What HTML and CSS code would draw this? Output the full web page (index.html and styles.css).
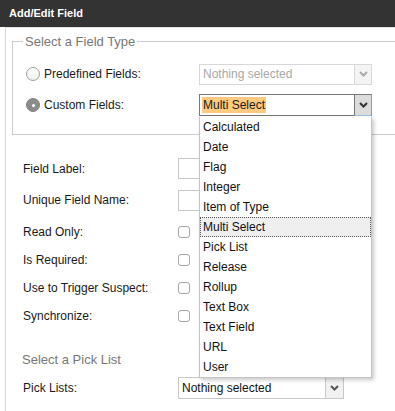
FILE: index.html
```html
<!DOCTYPE html>
<html>
<head>
<meta charset="utf-8">
<link rel="stylesheet" href="styles.css">
</head>
<body>
<div class="header">Add/Edit Field</div>
<div class="content">
  <fieldset class="type-set">
    <legend>Select a Field Type</legend>
    <div class="type-row">
      <label class="radio-label"><span class="radio"></span>Predefined Fields:</label>
      <div class="select disabled">
        <span class="select-text">Nothing selected</span>
        <span class="arrow"><svg width="9" height="6" viewBox="0 0 9 6"><path d="M1 1 L4.5 4.5 L8 1" fill="none" stroke="currentColor" stroke-width="2"/></svg></span>
      </div>
    </div>
    <div class="type-row second">
      <label class="radio-label"><span class="radio checked"></span>Custom Fields:</label>
      <div class="select-wrap">
        <div class="select open">
          <span class="select-text"><span class="hl">Multi Select</span></span>
          <span class="arrow"><svg width="9" height="6" viewBox="0 0 9 6"><path d="M1 1 L4.5 4.5 L8 1" fill="none" stroke="currentColor" stroke-width="2"/></svg></span>
        </div>
        <ul class="menu">
          <li>Calculated</li>
          <li>Date</li>
          <li>Flag</li>
          <li>Integer</li>
          <li>Item of Type</li>
          <li class="active">Multi Select</li>
          <li>Pick List</li>
          <li>Release</li>
          <li>Rollup</li>
          <li>Text Box</li>
          <li>Text Field</li>
          <li>URL</li>
          <li>User</li>
        </ul>
      </div>
    </div>
  </fieldset>

  <div class="form">
    <div class="row tall first-tall"><span class="lbl">Field Label:</span><span class="input"></span></div>
    <div class="row tall"><span class="lbl">Unique Field Name:</span><span class="input"></span></div>
    <div class="row check first"><span class="lbl">Read Only:</span><span class="checkbox"></span></div>
    <div class="row check"><span class="lbl">Is Required:</span><span class="checkbox"></span></div>
    <div class="row check"><span class="lbl">Use to Trigger Suspect:</span><span class="checkbox"></span></div>
    <div class="row check"><span class="lbl">Synchronize:</span><span class="checkbox"></span></div>
    <div class="section-title">Select a Pick List</div>
    <div class="row check"><span class="lbl">Pick Lists:</span>
      <div class="select pick">
        <span class="select-text">Nothing selected</span>
        <span class="arrow"><svg width="9" height="6" viewBox="0 0 9 6"><path d="M1 1 L4.5 4.5 L8 1" fill="none" stroke="currentColor" stroke-width="2"/></svg></span>
      </div>
    </div>
  </div>
</div>
</body>
</html>
```
FILE: styles.css
```css
html, body {
  margin: 0;
  padding: 0;
  background: #fff;
  overflow: hidden;
}
body {
  font-family: "Liberation Sans", Arial, Helvetica, sans-serif;
  font-size: 12px;
  color: #1a1a1a;
  width: 395px;
  height: 411px;
}
.header {
  height: 27px;
  background: #333333;
  color: #fff;
  font-weight: bold;
  font-size: 11px;
  line-height: 26px;
  padding-left: 9px;
}
.content {
  margin-left: 5px;
  border-left: 1px solid #d9d9d9;
  border-top: 1px solid #e2e2e2;
  padding-left: 6px;
  height: 383px;
}
.type-set {
  margin: 5px 0 0 0;
  padding: 13px 0 18px 13px;
  border: 1px solid #cccccc;
  border-right: none;
}
.type-set legend {
  font-size: 13px;
  color: #777;
  padding: 0 2px;
  margin-left: -3px;
  line-height: 17px;
}
.type-row {
  display: flex;
  align-items: center;
  height: 22px;
}
.type-row.second {
  margin-top: 9px;
}
.radio-label {
  width: 173px;
  display: flex;
  align-items: center;
  gap: 4px;
}
.radio {
  width: 12px;
  height: 12px;
  border: 1px solid #a0a0a0;
  border-radius: 50%;
  background: linear-gradient(#ffffff, #f0f0f0);
  box-sizing: content-box;
  flex: none;
}
.radio.checked {
  background: #8c8c8c;
  border-color: #808080;
  position: relative;
}
.radio.checked::after {
  content: "";
  position: absolute;
  left: 4.5px;
  top: 4.5px;
  width: 3px;
  height: 3px;
  border-radius: 50%;
  background: #fff;
}
.select {
  width: 173px;
  height: 22px;
  box-sizing: border-box;
  border: 1px solid #c8c8c8;
  display: flex;
  align-items: stretch;
  background: #fff;
}
.select-text {
  flex: 1;
  padding-left: 3px;
  line-height: 19px;
  white-space: nowrap;
  overflow: hidden;
}
.arrow {
  width: 16px;
  border-left: 1px solid #c8c8c8;
  display: flex;
  align-items: center;
  justify-content: center;
  background: #f4f4f4;
  color: #555;
}
.select.disabled {
  height: 21px;
  border-color: #d8d8d8;
}
.select.disabled .select-text {
  color: #a8a8a8;
  line-height: 19px;
}
.select.disabled .arrow {
  border-left-color: #d8d8d8;
  color: #aaa;
}
.select-wrap {
  position: relative;
}
.select.open {
  border-color: #777;
  border-right-color: #999;
}
.select.open .select-text {
  padding-left: 2px;
  line-height: 20px;
}
.select.open .arrow {
  background: #dcdcdc;
  border-left-color: #777;
  border-bottom: 1px solid #9cc3e6;
  margin-bottom: -1px;
  color: #333;
}
.hl {
  background: #fdca80;
  padding: 1px 1px 1px 1px;
}
.menu {
  position: absolute;
  left: 0;
  top: 23px;
  width: 173px;
  box-sizing: border-box;
  margin: 0;
  padding: 0;
  list-style: none;
  background: #fff;
  border: 1px solid #c4c4c4;
  border-top: none;
  box-shadow: 2px 2px 4px rgba(0, 0, 0, 0.22);
  z-index: 5;
}
.menu li {
  height: 20px;
  line-height: 20px;
  padding-left: 3px;
  box-sizing: border-box;
  color: #111;
}
.menu li.active {
  background: #efefef;
  border: 1px dotted #555;
  line-height: 18px;
  padding-left: 2px;
}
.form {
  padding-left: 11px;
  padding-top: 18px;
}
.row {
  display: flex;
  align-items: center;
}
.row.tall {
  height: 32px;
}
.row.tall.first-tall {
  height: 31px;
}
.row.check {
  height: 28px;
}
.row.check.first {
  margin-top: 2px;
}
.lbl {
  width: 155px;
  flex: none;
}
.input {
  width: 180px;
  height: 21px;
  box-sizing: border-box;
  border: 1px solid #c8c8c8;
  flex: none;
}
.checkbox {
  width: 12px;
  height: 12px;
  box-sizing: border-box;
  border: 1px solid #a6a6a6;
  border-radius: 3px;
  background: #fff;
}
.section-title {
  font-size: 13px;
  color: #777;
  margin: 22px 0 0 -1px;
  height: 16px;
  line-height: 16px;
  margin-bottom: 6px;
}
.select.pick {
  width: 166px;
  height: 22px;
}
.select.pick .select-text {
  line-height: 20px;
  color: #111;
}
.select.pick .arrow {
  width: 17px;
  background: #f2f2f2;
}
```
